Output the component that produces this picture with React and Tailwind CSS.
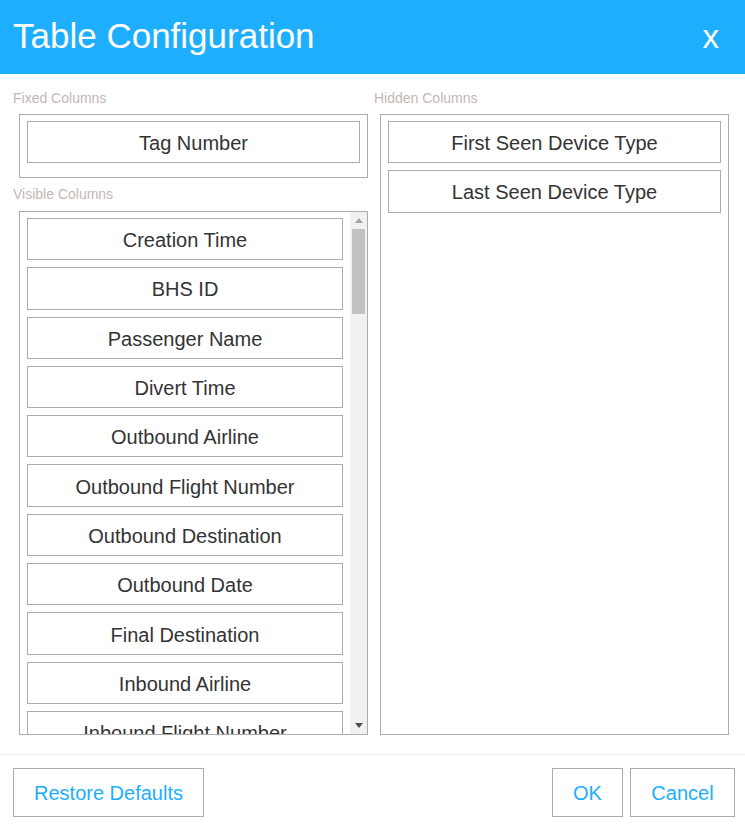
import React from "react";

const font = { fontFamily: '"Liberation Sans", Arial, sans-serif' };

function Item({ children }) {
  return (
    <div className="h-[42.3px] mb-[7px] border border-[#ababab] flex items-center justify-center pt-[2px] text-[20px] text-[#333] whitespace-nowrap shrink-0">
      {children}
    </div>
  );
}

function Label({ children, className = "" }) {
  return (
    <div className={"h-[16px] leading-[16px] pt-[1px] text-[14px] text-[#c6b5b5] " + className}>
      {children}
    </div>
  );
}

const visible = [
  "Creation Time",
  "BHS ID",
  "Passenger Name",
  "Divert Time",
  "Outbound Airline",
  "Outbound Flight Number",
  "Outbound Destination",
  "Outbound Date",
  "Final Destination",
  "Inbound Airline",
  "Inbound Flight Number",
  "Inbound Origin",
  "Inbound Date",
];

export default function App() {
  return (
    <div className="w-[745px] h-[828px] bg-white flex flex-col overflow-hidden" style={font}>
      <div className="h-[74px] bg-[#1eaefe] flex items-center justify-between pl-[13px] pr-[26px] shrink-0">
        <div className="text-[35px] text-white leading-none pb-[3px]">Table Configuration</div>
        <div className="text-[33px] text-white leading-none pb-[1px]">x</div>
      </div>

      <div className="h-[680px] flex gap-[6px] pl-[13px] pt-[15px] shrink-0">
        <div className="w-[355px] flex flex-col">
          <Label>Fixed Columns</Label>
          <div className="mt-[9px] ml-[6px] w-[349px] h-[64px] border border-[#ababab] px-[7px] pt-[6px]">
            <Item>Tag Number</Item>
          </div>
          <Label className="mt-[7px]">Visible Columns</Label>
          <div className="mt-[10px] ml-[6px] w-[349px] h-[524px] border border-[#ababab] flex">
            <div className="w-[330px] pl-[7px] pr-[7px] pt-[6px] overflow-hidden flex flex-col">
              {visible.map((v) => (
                <Item key={v}>{v}</Item>
              ))}
            </div>
            <div className="w-[17px] h-full bg-[#f1f1f1] flex flex-col">
              <div className="h-[17px] flex items-center justify-center">
                <svg width="8" height="5" viewBox="0 0 8 5">
                  <polygon points="0,5 8,5 4,0" fill="#a3a3a3" />
                </svg>
              </div>
              <div className="h-[85px] mx-[2px] bg-[#c1c1c1]" />
              <div className="flex-1" />
              <div className="h-[17px] flex items-center justify-center">
                <svg width="8" height="5" viewBox="0 0 8 5">
                  <polygon points="0,0 8,0 4,5" fill="#505050" />
                </svg>
              </div>
            </div>
          </div>
        </div>

        <div className="w-[355px] flex flex-col">
          <Label>Hidden Columns</Label>
          <div className="mt-[9px] ml-[6px] w-[349px] h-[621px] border border-[#ababab] px-[7px] pt-[6px] flex flex-col">
            <Item>First Seen Device Type</Item>
            <Item>Last Seen Device Type</Item>
          </div>
        </div>
      </div>

      <div className="border-t border-[#eeeeee] flex items-start justify-between pl-[13px] pr-[10px] pt-[13px]">
        <button className="h-[49px] w-[191px] border border-[#ababab] text-[20px] text-[#1eaefe] bg-white">
          Restore Defaults
        </button>
        <div className="flex gap-[7px]">
          <button className="h-[49px] w-[71px] border border-[#ababab] text-[20px] text-[#1eaefe] bg-white">
            OK
          </button>
          <button className="h-[49px] w-[105px] border border-[#ababab] text-[20px] text-[#1eaefe] bg-white">
            Cancel
          </button>
        </div>
      </div>
    </div>
  );
}
